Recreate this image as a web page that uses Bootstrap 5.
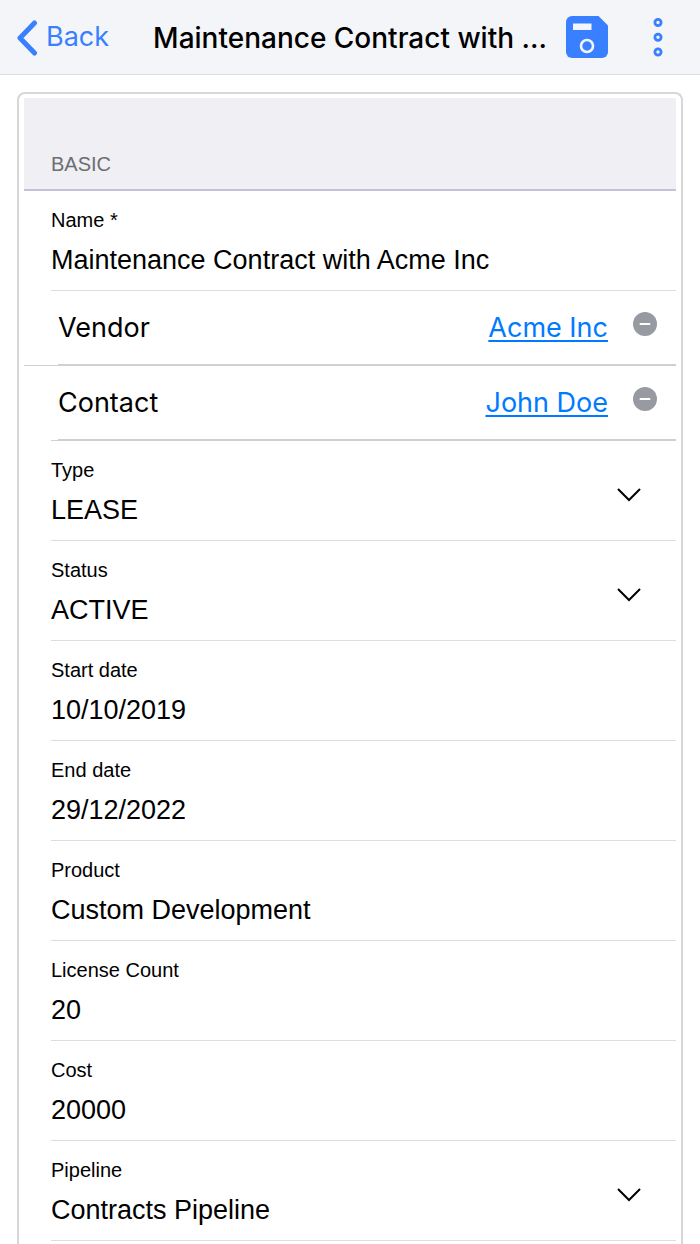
<!DOCTYPE html>
<html lang="en">
<head>
<meta charset="utf-8">
<meta name="viewport" content="width=device-width, initial-scale=1">
<title>Maintenance Contract</title>
<link href="https://cdn.jsdelivr.net/npm/bootstrap@5.3.0/dist/css/bootstrap.min.css" rel="stylesheet">
<style>
  body { font-family: "Liberation Sans", Arial, sans-serif; color: #000; background: #fff; }
  svg { display: block; flex: none; }
  .ui-font { font-family: Inter, "Noto Sans", sans-serif; }
  .app-bar { height: 75px; padding: 0 37px 0 16px; background: #f4f5f9; border-bottom: 1px solid #dcdde0; }
  .app-bar a, .app-bar button { color: #3880ff; }
  .back-link { padding-top: 1px; font-size: 27px; gap: 8px; }
  .app-title { padding: 2px 19px 0 0; font-size: 28px; font-weight: 500; line-height: 36px; }
  .app-actions { gap: 45px; }
  .bare-btn { padding: 0; border: 0; background: none; }
  .form-panel { margin: 17px 17px 0; padding: 4px 5px 0; border: 2px solid #d7d7d9; border-bottom: 0; border-radius: 8px 8px 0 0; }
  .group-head { height: 93px; margin: 0; padding: 0 27px 13px; font-size: 20px; line-height: 24px; color: #6d6d72; background: #efeff4; border-bottom: 2px solid #c3c2da; }
  .entry { margin-left: 27px; padding: 17px 35px 14px 0; border-bottom: 1px solid #dedede; }
  .entry label { font-size: 20px; line-height: 24px; margin-bottom: 12px; }
  .entry input, .entry select { width: 100%; height: 32px; padding: 0; border: 0; outline: 0; appearance: none; background: none; color: #000; font-size: 27px; line-height: 32px; }
  .entry svg { margin-top: 6px; }
  .lookup { border-bottom: 1px solid #d0d0d0; padding-left: 34px; }
  .lookup.inset { margin-left: 27px; padding-left: 7px; }
  .lookup-body { height: 74px; padding-right: 19px; font-size: 27px; line-height: 36px; border-bottom: 1px solid #d0d0d0; }
  .lookup-body a { color: #007aff; text-decoration-thickness: 2px; text-underline-offset: 3px; }
  .remove-btn { margin: 0 0 8px 25px; }
</style>
</head>
<body class="min-vh-100 d-flex flex-column">
<header class="app-bar d-flex align-items-center">
  <a href="#" class="back-link ui-font d-flex align-items-center text-decoration-none">
    <svg width="22" height="36" viewBox="0 0 22 36" fill="none" stroke="currentColor" stroke-width="5" stroke-linecap="round" stroke-linejoin="round" aria-hidden="true"><path d="M18.500 3L4 18L18.500 33"/></svg>
    <span>Back</span>
  </a>
  <h1 class="app-title ui-font m-0 ms-auto text-nowrap">Maintenance Contract with ...</h1>
  <div class="app-actions d-flex align-items-center">
    <button type="button" class="bare-btn" aria-label="Save">
      <svg width="42" height="42" viewBox="0 0 42 42" aria-hidden="true"><path fill="currentColor" d="M6 0H32.500L42 9.500V36a6 6 0 0 1-6 6H6a6 6 0 0 1-6-6V6a6 6 0 0 1 6-6Z"/><path fill="#f4f5f9" d="M7 7.500H25.500V14H7z"/><circle cx="21" cy="30" r="6" fill="none" stroke="#f4f5f9" stroke-width="2.600"/></svg>
    </button>
    <button type="button" class="bare-btn" aria-label="More">
      <svg width="10" height="40" viewBox="0 0 10 40" fill="none" stroke="currentColor" stroke-width="2.800" aria-hidden="true"><circle cx="5" cy="5.500" r="3.100"/><circle cx="5" cy="20.300" r="3.100"/><circle cx="5" cy="35" r="3.100"/></svg>
    </button>
  </div>
</header>

<main class="form-panel flex-grow-1">
  <form>
    <h2 class="group-head d-flex align-items-end">BASIC</h2>

    <div class="entry"><label class="d-block" for="name">Name *</label><input id="name" type="text" class="d-block" value="Maintenance Contract with Acme Inc"></div>

    <div class="lookup">
      <div class="lookup-body ui-font d-flex align-items-center">
        <span class="me-auto">Vendor</span><a href="#">Acme Inc</a>
        <button type="button" class="bare-btn remove-btn" aria-label="Remove vendor"><svg width="24" height="24" viewBox="0 0 24 24" aria-hidden="true"><circle cx="12" cy="12" r="12" fill="#989aa2"/><path d="M7.500 12H16.500" stroke="#fff" stroke-width="2" stroke-linecap="round"/></svg></button>
      </div>
    </div>
    <div class="lookup inset">
      <div class="lookup-body ui-font d-flex align-items-center">
        <span class="me-auto">Contact</span><a href="#">John Doe</a>
        <button type="button" class="bare-btn remove-btn" aria-label="Remove contact"><svg width="24" height="24" viewBox="0 0 24 24" aria-hidden="true"><circle cx="12" cy="12" r="12" fill="#989aa2"/><path d="M7.500 12H16.500" stroke="#fff" stroke-width="2" stroke-linecap="round"/></svg></button>
      </div>
    </div>

    <div class="entry d-flex align-items-center">
      <div class="flex-grow-1"><label class="d-block" for="type">Type</label><select id="type" class="d-block"><option>LEASE</option></select></div>
      <svg width="24" height="14" viewBox="0 0 24 14" fill="none" stroke="#000" stroke-width="2" aria-hidden="true"><path d="M1 1L12 12L23 1"/></svg>
    </div>
    <div class="entry d-flex align-items-center">
      <div class="flex-grow-1"><label class="d-block" for="status">Status</label><select id="status" class="d-block"><option>ACTIVE</option></select></div>
      <svg width="24" height="14" viewBox="0 0 24 14" fill="none" stroke="#000" stroke-width="2" aria-hidden="true"><path d="M1 1L12 12L23 1"/></svg>
    </div>
    <div class="entry"><label class="d-block" for="start">Start date</label><input id="start" type="text" class="d-block" value="10/10/2019"></div>
    <div class="entry"><label class="d-block" for="end">End date</label><input id="end" type="text" class="d-block" value="29/12/2022"></div>
    <div class="entry"><label class="d-block" for="product">Product</label><input id="product" type="text" class="d-block" value="Custom Development"></div>
    <div class="entry"><label class="d-block" for="licenses">License Count</label><input id="licenses" type="text" class="d-block" value="20"></div>
    <div class="entry"><label class="d-block" for="cost">Cost</label><input id="cost" type="text" class="d-block" value="20000"></div>
    <div class="entry d-flex align-items-center">
      <div class="flex-grow-1"><label class="d-block" for="pipeline">Pipeline</label><select id="pipeline" class="d-block"><option>Contracts Pipeline</option></select></div>
      <svg width="24" height="14" viewBox="0 0 24 14" fill="none" stroke="#000" stroke-width="2" aria-hidden="true"><path d="M1 1L12 12L23 1"/></svg>
    </div>
  </form>
</main>
<script src="https://cdn.jsdelivr.net/npm/bootstrap@5.3.0/dist/js/bootstrap.bundle.min.js"></script>
</body>
</html>
